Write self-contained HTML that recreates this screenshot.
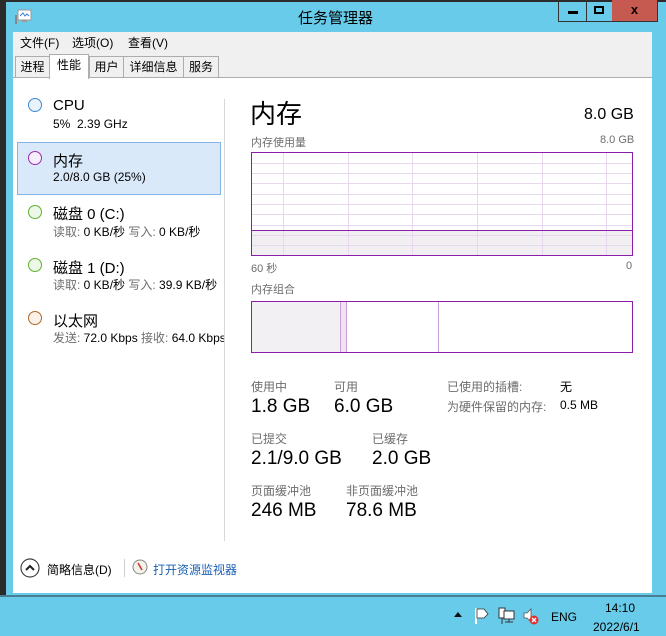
<!DOCTYPE html>
<html><head><meta charset="utf-8"><style>
*{margin:0;padding:0;box-sizing:border-box}
body{width:666px;height:636px;overflow:hidden;background:#67cbe9;font-family:"Liberation Sans","Noto Sans CJK SC",sans-serif;position:relative;color:#000}
.a{position:absolute;white-space:nowrap}
.g{color:#6d6d6d}
</style></head><body>
<div class="a" style="left:0;top:0;width:666px;height:2px;background:#2b2b2b"></div>
<div class="a" style="left:0;top:0;width:6px;height:597px;background:#2b2b2b"></div>
<div class="a" style="left:0;top:595px;width:666px;height:2px;background:#4a7f92"></div>
<svg class="a" style="left:14px;top:9px" width="18" height="16"><rect x="4" y="1" width="13" height="10" fill="#fff" stroke="#999"/><polyline points="6,7 9,4 11,7 13,5 15,7" fill="none" stroke="#3a7fd5" stroke-width="1"/><rect x="8" y="11" width="5" height="2" fill="#999"/><rect x="1" y="6" width="2" height="9" fill="#888"/></svg>
<div class="a" style="left:298px;top:7px;font-size:15px">任务管理器</div>
<div class="a" style="left:558px;top:0;width:29px;height:22px;border:1px solid #333;border-top:0"><div style="position:absolute;left:9px;top:11px;width:10px;height:3px;background:#000"></div></div>
<div class="a" style="left:586px;top:0;width:27px;height:22px;border:1px solid #333;border-top:0;border-left:0"><div style="position:absolute;left:8px;top:6px;width:10px;height:8px;border:2px solid #000"></div></div>
<div class="a" style="left:612px;top:0;width:46px;height:22px;background:#c75a50;border:1px solid #333;border-top:0;border-left:0;font-weight:bold;font-size:13px;text-align:center;line-height:20px">x</div>
<div class="a" style="left:13px;top:32px;width:639px;height:561px;background:#fff"></div>
<div class="a" style="left:13px;top:32px;width:639px;height:20px;background:#f0f0f0"></div>
<div class="a" style="left:20px;top:34px;font-size:12px">文件(F)</div>
<div class="a" style="left:72px;top:34px;font-size:12px">选项(O)</div>
<div class="a" style="left:128px;top:34px;font-size:12px">查看(V)</div>
<div class="a" style="left:13px;top:52px;width:639px;height:26px;background:#f0f0f0;border-bottom:1px solid #adadad"></div>
<div class="a" style="left:15px;top:56px;width:35px;height:22px;border:1px solid #adadad;background:#f0f0f0;font-size:12px;text-align:center;line-height:20px">进程</div>
<div class="a" style="left:49px;top:54px;width:40px;height:25px;border:1px solid #adadad;border-bottom:0;background:#fff;font-size:12px;text-align:center;line-height:20px">性能</div>
<div class="a" style="left:89px;top:56px;width:35px;height:22px;border:1px solid #adadad;background:#f0f0f0;font-size:12px;text-align:center;line-height:20px">用户</div>
<div class="a" style="left:123px;top:56px;width:61px;height:22px;border:1px solid #adadad;background:#f0f0f0;font-size:12px;text-align:center;line-height:20px">详细信息</div>
<div class="a" style="left:183px;top:56px;width:36px;height:22px;border:1px solid #adadad;background:#f0f0f0;font-size:12px;text-align:center;line-height:20px">服务</div>
<div class="a" style="left:17px;top:142px;width:204px;height:53px;background:#dae9fa;border:1px solid #84b4e6"></div>
<div class="a" style="left:28px;top:98px;width:14px;height:14px;border-radius:50%;border:1px solid #3c8ad1;background:#eaf3fb"></div>
<div class="a" style="left:53px;top:97px;font-size:15px">CPU</div>
<div class="a" style="left:53px;top:117px;font-size:12px">5%&nbsp; 2.39 GHz</div>
<div class="a" style="left:28px;top:151px;width:14px;height:14px;border-radius:50%;border:1px solid #9a2bb0;background:#f6eefa"></div>
<div class="a" style="left:53px;top:150px;font-size:15px">内存</div>
<div class="a" style="left:53px;top:170px;font-size:12px">2.0/8.0 GB (25%)</div>
<div class="a" style="left:28px;top:205px;width:14px;height:14px;border-radius:50%;border:1px solid #5fb030;background:#eef8e8"></div>
<div class="a" style="left:53px;top:203px;font-size:15px">磁盘 0 (C:)</div>
<div class="a g" style="left:53px;top:223px;font-size:12px">读取: <span style="color:#000">0 KB/秒</span> 写入: <span style="color:#000">0 KB/秒</span></div>
<div class="a" style="left:28px;top:258px;width:14px;height:14px;border-radius:50%;border:1px solid #5fb030;background:#eef8e8"></div>
<div class="a" style="left:53px;top:257px;font-size:15px">磁盘 1 (D:)</div>
<div class="a g" style="left:53px;top:276px;font-size:12px;width:171px;overflow:hidden">读取: <span style="color:#000">0 KB/秒</span> 写入: <span style="color:#000">39.9 KB/秒</span></div>
<div class="a" style="left:28px;top:311px;width:14px;height:14px;border-radius:50%;border:1px solid #b0662a;background:#fbf1e8"></div>
<div class="a" style="left:53px;top:310px;font-size:15px">以太网</div>
<div class="a g" style="left:53px;top:329px;font-size:12px;width:171px;overflow:hidden">发送: <span style="color:#000">72.0 Kbps</span> 接收: <span style="color:#000">64.0 Kbps</span></div>
<div class="a" style="left:224px;top:99px;width:1px;height:442px;background:#d9d9d9"></div>
<div class="a" style="left:250px;top:94px;font-size:26px">内存</div>
<div class="a" style="left:584px;top:106px;font-size:16px">8.0 GB</div>
<div class="a g" style="left:251px;top:134px;font-size:11px">内存使用量</div>
<div class="a g" style="left:600px;top:134px;font-size:11px">8.0 GB</div>
<svg class="a" style="left:251px;top:152px" width="382" height="104">
<rect x="0" y="78" width="382" height="26" fill="#f2eff3"/>
<g stroke="#e8d8ee" stroke-width="1">
<line x1="0" y1="11.5" x2="382" y2="11.5"/><line x1="0" y1="21.5" x2="382" y2="21.5"/><line x1="0" y1="31.5" x2="382" y2="31.5"/><line x1="0" y1="42.5" x2="382" y2="42.5"/><line x1="0" y1="52.5" x2="382" y2="52.5"/><line x1="0" y1="62.5" x2="382" y2="62.5"/><line x1="0" y1="73.5" x2="382" y2="73.5"/><line x1="0" y1="83.5" x2="382" y2="83.5"/><line x1="0" y1="93.5" x2="382" y2="93.5"/>
<line x1="32.5" y1="0" x2="32.5" y2="104"/><line x1="97.5" y1="0" x2="97.5" y2="104"/><line x1="161.5" y1="0" x2="161.5" y2="104"/><line x1="226.5" y1="0" x2="226.5" y2="104"/><line x1="291.5" y1="0" x2="291.5" y2="104"/><line x1="355.5" y1="0" x2="355.5" y2="104"/>
</g>
<line x1="0" y1="78.5" x2="382" y2="78.5" stroke="#8b1fa9"/>
<rect x="0.5" y="0.5" width="381" height="103" fill="none" stroke="#8b1fa9"/>
</svg>
<div class="a g" style="left:251px;top:260px;font-size:11px">60 秒</div>
<div class="a g" style="left:626px;top:260px;font-size:11px">0</div>
<div class="a g" style="left:251px;top:281px;font-size:11px">内存组合</div>
<svg class="a" style="left:251px;top:301px" width="382" height="52">
<rect x="0" y="0" width="89" height="52" fill="#f3f0f3"/>
<rect x="89" y="0" width="6" height="52" fill="#efe2f3"/>
<line x1="89.5" y1="0" x2="89.5" y2="52" stroke="#c9a0d8"/>
<line x1="95.5" y1="0" x2="95.5" y2="52" stroke="#c9a0d8"/>
<line x1="187.5" y1="0" x2="187.5" y2="52" stroke="#c9a0d8"/>
<rect x="0.5" y="0.5" width="381" height="51" fill="none" stroke="#8b1fa9"/>
</svg>
<div class="a g" style="left:251px;top:378px;font-size:12px">使用中</div>
<div class="a" style="left:251px;top:396px;font-size:19px">1.8 GB</div>
<div class="a g" style="left:334px;top:378px;font-size:12px">可用</div>
<div class="a" style="left:334px;top:396px;font-size:19px">6.0 GB</div>
<div class="a g" style="left:447px;top:378px;font-size:12px">已使用的插槽:</div>
<div class="a" style="left:560px;top:378px;font-size:12px">无</div>
<div class="a g" style="left:447px;top:398px;font-size:12px">为硬件保留的内存:</div>
<div class="a" style="left:560px;top:398px;font-size:12px">0.5 MB</div>
<div class="a g" style="left:251px;top:430px;font-size:12px">已提交</div>
<div class="a" style="left:251px;top:448px;font-size:19px">2.1/9.0 GB</div>
<div class="a g" style="left:372px;top:430px;font-size:12px">已缓存</div>
<div class="a" style="left:372px;top:448px;font-size:19px">2.0 GB</div>
<div class="a g" style="left:251px;top:482px;font-size:12px">页面缓冲池</div>
<div class="a" style="left:251px;top:500px;font-size:19px">246 MB</div>
<div class="a g" style="left:346px;top:482px;font-size:12px">非页面缓冲池</div>
<div class="a" style="left:346px;top:500px;font-size:19px">78.6 MB</div>
<svg class="a" style="left:20px;top:558px" width="20" height="20"><circle cx="10" cy="10" r="9" fill="#fff" stroke="#444" stroke-width="1.2"/><polyline points="6,12 10,8 14,12" fill="none" stroke="#222" stroke-width="2"/></svg>
<div class="a" style="left:47px;top:561px;font-size:12px">简略信息(D)</div>
<div class="a" style="left:124px;top:559px;width:1px;height:18px;background:#ccc"></div>
<svg class="a" style="left:132px;top:559px" width="16" height="16"><circle cx="8" cy="8" r="7" fill="#f4f0ea" stroke="#888"/><line x1="6" y1="4" x2="10" y2="11" stroke="#c33" stroke-width="1.5"/></svg>
<div class="a" style="left:153px;top:561px;font-size:12px;color:#1a5fb4">打开资源监视器</div>
<div class="a" style="left:454px;top:612px;width:0;height:0;border-left:4px solid transparent;border-right:4px solid transparent;border-bottom:5px solid #111"></div>
<svg class="a" style="left:474px;top:607px" width="16" height="18"><line x1="2" y1="1" x2="2" y2="17" stroke="#fff" stroke-width="2"/><path d="M3 2 H10 L14 7 L10 11 H3Z" fill="#fff" stroke="#333" stroke-width="0.8"/></svg>
<svg class="a" style="left:498px;top:607px" width="18" height="18"><rect x="1" y="1" width="6" height="10" fill="#fff" stroke="#333"/><rect x="6" y="4" width="10" height="8" fill="#fff" stroke="#333"/><line x1="4" y1="11" x2="4" y2="17" stroke="#333"/><line x1="11" y1="12" x2="11" y2="15" stroke="#333"/><line x1="7" y1="15" x2="15" y2="15" stroke="#333"/></svg>
<svg class="a" style="left:522px;top:607px" width="18" height="18"><path d="M2 6 H5 L9 2 V15 L5 11 H2Z" fill="#fff" stroke="#555" stroke-width="0.8"/><circle cx="12" cy="13" r="4.5" fill="#e03030"/><path d="M10 11 L14 15 M14 11 L10 15" stroke="#fff" stroke-width="1.4"/></svg>
<div class="a" style="left:551px;top:610px;font-size:12px">ENG</div>
<div class="a" style="left:605px;top:601px;font-size:12px">14:10</div>
<div class="a" style="left:593px;top:620px;font-size:12px">2022/6/1</div>
</body></html>
